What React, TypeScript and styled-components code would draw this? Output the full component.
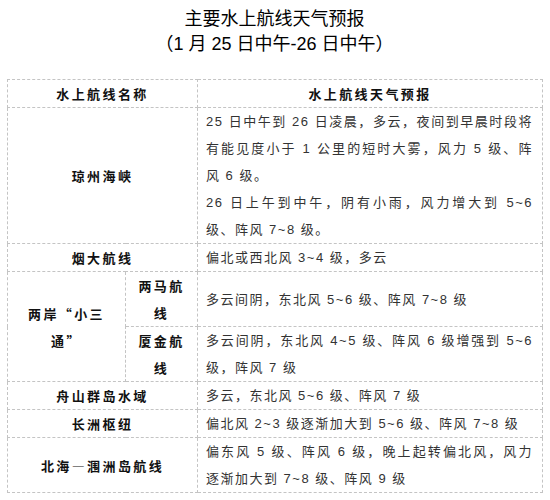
import React from "react";
import styled, { createGlobalStyle } from "styled-components";

const GlobalStyle = createGlobalStyle`
  html, body {
    margin: 0;
    background: #fff;
  }
`;

type Line = { text: string; full?: boolean };

type Route = {
  name: React.ReactNode;
  sub?: React.ReactNode;
  span?: number;
  lines: Line[];
};

const routes: Route[] = [
  {
    name: "琼州海峡",
    lines: [
      { text: "25 日中午到 26 日凌晨，多云，夜间到早晨时段将", full: true },
      { text: "有能见度小于 1 公里的短时大雾，风力 5 级、阵", full: true },
      { text: "风 6 级。" },
      { text: "26 日上午到中午，阴有小雨，风力增大到 5~6", full: true },
      { text: "级、阵风 7~8 级。" },
    ],
  },
  { name: "烟大航线", lines: [{ text: "偏北或西北风 3~4 级，多云" }] },
  {
    name: (
      <>
        两岸“小三
        <br />
        通”
      </>
    ),
    span: 2,
    sub: (
      <>
        两马航
        <br />
        线
      </>
    ),
    lines: [{ text: "多云间阴，东北风 5~6 级、阵风 7~8 级" }],
  },
  {
    name: null,
    sub: (
      <>
        厦金航
        <br />
        线
      </>
    ),
    lines: [
      { text: "多云间阴，东北风 4~5 级、阵风 6 级增强到 5~6", full: true },
      { text: "级，阵风 7 级" },
    ],
  },
  { name: "舟山群岛水域", lines: [{ text: "多云，东北风 5~6 级、阵风 7 级" }] },
  { name: "长洲枢纽", lines: [{ text: "偏北风 2~3 级逐渐加大到 5~6 级、阵风 7~8 级" }] },
  {
    name: "北海—涠洲岛航线",
    lines: [
      { text: "偏东风 5 级、阵风 6 级，晚上起转偏北风，风力", full: true },
      { text: "逐渐加大到 7~8 级、阵风 9 级" },
    ],
  },
];

const App = () => {
  return (
    <Page>
      <GlobalStyle />
      <Title>
        <div>主要水上航线天气预报</div>
        <div>（1 月 25 日中午-26 日中午）</div>
      </Title>

      <Table>
        <colgroup>
          <col style={{ width: 118 }} />
          <col style={{ width: 72 }} />
          <col style={{ width: 345 }} />
        </colgroup>
        <thead>
          <tr>
            <Label colSpan={2}>水上航线名称</Label>
            <Label>水上航线天气预报</Label>
          </tr>
        </thead>
        <tbody>
          {routes.map((r, i) => (
            <tr key={i}>
              {r.sub ? (
                <>
                  {r.name && <Label rowSpan={r.span}>{r.name}</Label>}
                  <Label>{r.sub}</Label>
                </>
              ) : (
                <Label colSpan={2}>{r.name}</Label>
              )}
              <Forecast>
                {r.lines.map((l, j) => (
                  <ForecastLine key={j} $full={l.full}>
                    {l.text}
                  </ForecastLine>
                ))}
              </Forecast>
            </tr>
          ))}
        </tbody>
      </Table>
    </Page>
  );
};

const Page = styled.div`
  width: 550px;
  padding: 7px 0 0 7px;
  box-sizing: border-box;
  font-family: "Liberation Sans", "Noto Sans CJK SC", sans-serif;
`;

const Title = styled.div`
  width: 535px;
  text-align: center;
  font-size: 18px;
  line-height: 25px;
  color: #000;
  margin-bottom: 22px;
`;

const Table = styled.table`
  width: 535px;
  table-layout: fixed;
  border-collapse: collapse;
  border: 1px dashed #c4c4c4;

  td,
  th {
    border: 1px dashed #c4c4c4;
    padding: 0;
    line-height: 27px;
    font-size: 13px;
    vertical-align: middle;
  }
`;

const Label = styled.td`
  text-align: center;
  font-weight: 700;
  color: #111;
  letter-spacing: 2.4px;
  font-family: "Noto Sans CJK SC", sans-serif;
  font-feature-settings: "fwid";
`;

const Forecast = styled.td`
  padding: 0 9px 0 8px !important;
  color: #333;
  letter-spacing: 1.5px;
`;

const ForecastLine = styled.div<{ $full?: boolean }>`
  text-align: ${(p) => (p.$full ? "justify" : "left")};
  text-align-last: ${(p) => (p.$full ? "justify" : "left")};
  white-space: nowrap;
`;

export default App;
